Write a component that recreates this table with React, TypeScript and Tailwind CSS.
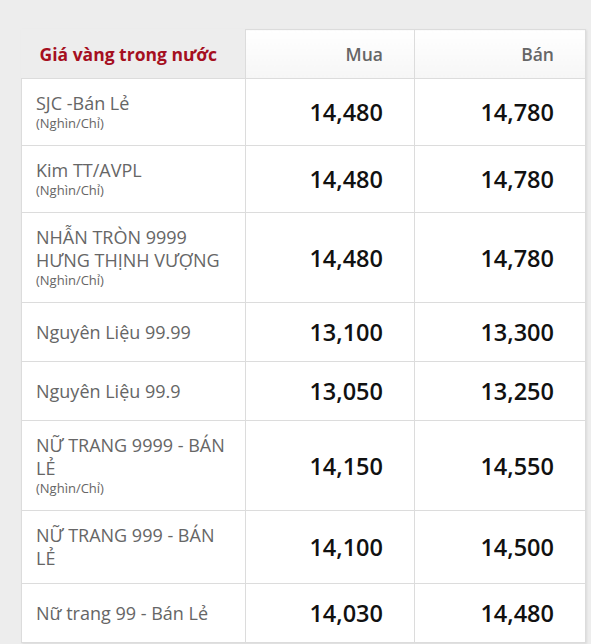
import React from "react";

type Row = { name: string; unit?: boolean; buy: string; sell: string };

const rows: Row[] = [
  { name: "SJC -Bán Lẻ", unit: true, buy: "14,480", sell: "14,780" },
  { name: "Kim TT/AVPL", unit: true, buy: "14,480", sell: "14,780" },
  { name: "NHẪN TRÒN 9999 HƯNG THỊNH VƯỢNG", unit: true, buy: "14,480", sell: "14,780" },
  { name: "Nguyên Liệu 99.99", buy: "13,100", sell: "13,300" },
  { name: "Nguyên Liệu 99.9", buy: "13,050", sell: "13,250" },
  { name: "NỮ TRANG 9999 - BÁN LẺ", unit: true, buy: "14,150", sell: "14,550" },
  { name: "NỮ TRANG 999 - BÁN LẺ", buy: "14,100", sell: "14,500" },
  { name: "Nữ trang 99 - Bán Lẻ", buy: "14,030", sell: "14,480" },
];

const App = () => {
  return (
    <div
      className="min-h-[644px] bg-[#ededed] pt-[29px] pl-[21px]"
      style={{ fontFamily: '"Open Sans", "Noto Sans", sans-serif' }}
    >
      <table className="w-[564px] table-fixed border-collapse shadow-[1px_1px_2px_rgba(0,0,0,0.08)]">
        <colgroup>
          <col className="w-[224px]" />
          <col className="w-[169px]" />
          <col className="w-[171px]" />
        </colgroup>
        <thead>
          <tr className="h-[49px]">
            <th className="bg-[#ededed] pl-[18px] text-left text-[17.5px] font-bold text-[#a50f1f]">
              Giá vàng trong nước
            </th>
            <th className="border border-[#dcdcdc] bg-gradient-to-b from-white to-[#f6f6f6] pr-[31px] text-right text-[17.5px] font-semibold text-[#666]">
              Mua
            </th>
            <th className="border border-[#dcdcdc] bg-gradient-to-b from-white to-[#f6f6f6] pr-[31px] text-right text-[17.5px] font-semibold text-[#666]">
              Bán
            </th>
          </tr>
        </thead>
        <tbody className="bg-white">
          {rows.map((r) => (
            <tr key={r.name}>
              <td className="border border-[#dcdcdc] py-[13px] pl-[14px] pr-[16px] align-middle">
                <div className="text-[18px] leading-[23px] text-[#666]">{r.name}</div>
                {r.unit && (
                  <div className="text-[13px] leading-[17px] text-[#666]">(Nghìn/Chỉ)</div>
                )}
              </td>
              <td className="border border-[#dcdcdc] py-[13px] pr-[31px] text-right align-middle text-[23.5px] leading-[32px] font-semibold text-[#111]">
                {r.buy}
              </td>
              <td className="border border-[#dcdcdc] py-[13px] pr-[31px] text-right align-middle text-[23.5px] leading-[32px] font-semibold text-[#111]">
                {r.sell}
              </td>
            </tr>
          ))}
        </tbody>
      </table>
    </div>
  );
};

export default App;
